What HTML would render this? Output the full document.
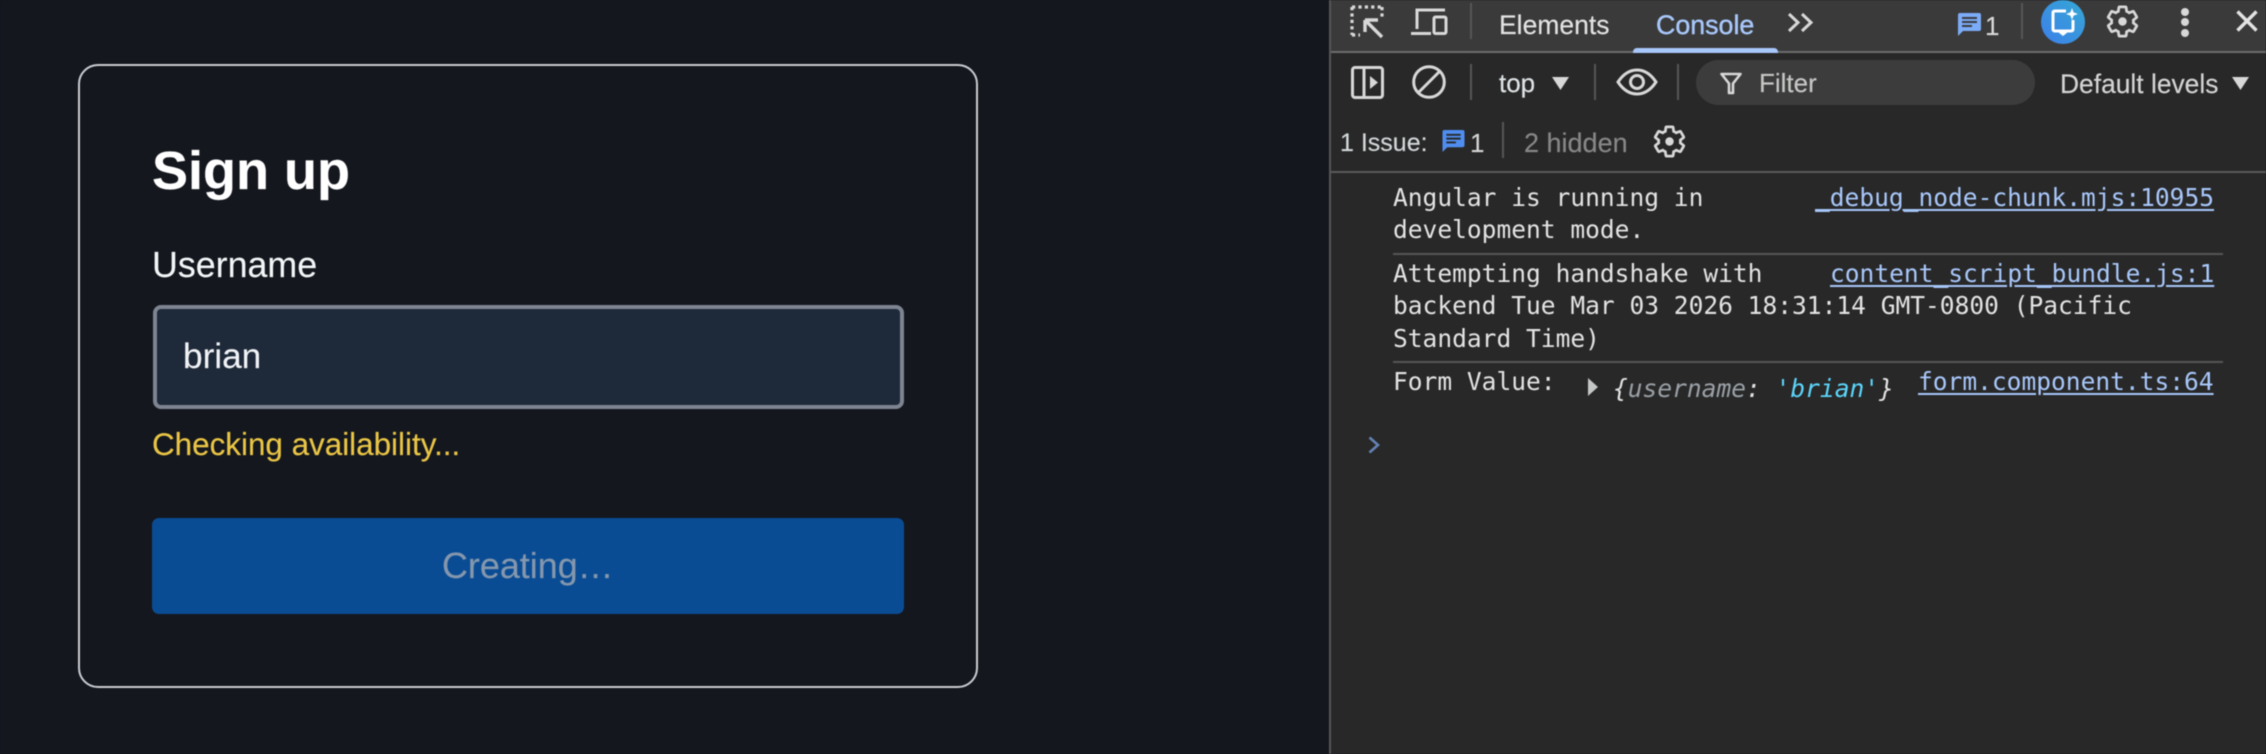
<!DOCTYPE html>
<html lang="en">
<head>
<meta charset="utf-8">
<title>Sign up</title>
<style>
html,body{margin:0;padding:0;width:2266px;height:754px;overflow:hidden;background:#14171e}
#root{position:absolute;left:0;top:0;width:2266px;height:754px;overflow:hidden;background:#14171e;filter:blur(.55px)}
.t,.m{position:absolute;line-height:0;white-space:pre}
.t{font-family:"Liberation Sans",sans-serif;-webkit-text-stroke:.15px currentColor}
.m{font-family:"DejaVu Sans Mono","Liberation Mono",monospace;font-size:24.55px;color:#e3e3e3}
.a{color:#a8c7fa;text-decoration:underline;text-underline-offset:3px}
.b{position:absolute;box-sizing:border-box}
.sep{position:absolute;width:2px;background:#565656}
svg{position:absolute;overflow:visible}
</style>
</head>
<body>
<div id="root">
  <!-- Form card -->
  <div class="b" style="left:78px;top:64px;width:900px;height:624px;border:2px solid #c9ccd1;border-radius:20px;background:#14171e"></div>
  <div class="t" style="left:152px;top:171px;font-size:54px;font-weight:700;color:#fff">Sign up</div>
  <div class="t" style="left:152px;top:265px;font-size:35.8px;color:#f2f6f7">Username</div>
  <div class="b" style="left:153px;top:305px;width:751px;height:104px;border:4px solid #7e8491;border-radius:8px;background:#1e2939"></div>
  <div class="t" style="left:183px;top:357px;font-size:35.2px;color:#f0f2f5">brian</div>
  <div class="t" style="left:152px;top:445px;font-size:31.4px;color:#eac545">Checking availability...</div>
  <div class="b" style="left:152px;top:518px;width:752px;height:96px;border-radius:7px;background:#0a4c94"></div>
  <div class="t" style="left:442px;top:566px;font-size:35.9px;color:#8497ad">Creating…</div>

  <!-- DevTools panel -->
  <div class="b" style="left:1329px;top:0;width:937px;height:754px;background:#282828;border-left:2px solid #555"></div>
  <div class="b" style="left:1331px;top:0;width:935px;height:51px;background:#3a3a3a"></div>
  <div class="b" style="left:1331px;top:51px;width:935px;height:2px;background:#6c6c6c"></div>
  <div class="b" style="left:1633px;top:48px;width:145px;height:5px;background:#a8c7fa;border-radius:4px 4px 0 0"></div>
  <div class="b" style="left:1331px;top:171px;width:935px;height:2px;background:#5a5a5a"></div>

  <!-- Toolbar 1 icons -->
  <svg style="left:1350px;top:5px" width="34" height="33" viewBox="0 0 34 33" fill="none" stroke="#d8d8d8">
    <path d="M2 2H32M2 2V30M2 30H10M32 2V14" stroke-width="3.2" stroke-dasharray="3.2 3.2"/>
    <path d="M15 15H28M15 15V27M15 15L32 32" stroke-width="3.4"/>
  </svg>
  <svg style="left:1411px;top:8px" width="37" height="28" viewBox="0 0 37 28" fill="none" stroke="#d8d8d8" stroke-width="3">
    <path d="M6 21V2H34"/><path d="M0 25.5H20"/><rect x="23" y="9" width="12" height="16.5" rx="1.5"/>
  </svg>
  <div class="sep" style="left:1470px;top:3px;height:36px"></div>
  <div class="t" style="left:1499px;top:25px;font-size:26.5px;color:#e3e3e3">Elements</div>
  <div class="t" style="left:1656px;top:25px;font-size:26.8px;color:#a8c7fa;-webkit-text-stroke:.4px #a8c7fa">Console</div>
  <svg style="left:1787px;top:12px" width="27" height="21" viewBox="0 0 27 21" fill="none" stroke="#d8d8d8" stroke-width="3">
    <path d="M2 2L11 10.5L2 19M15 2L24 10.5L15 19"/>
  </svg>
  <svg style="left:1958px;top:13px" width="23" height="23" viewBox="0 0 23 23">
    <path d="M2 0H21Q23 0 23 2V16Q23 18 21 18H5L0 23V2Q0 0 2 0Z" fill="#7cacf8"/>
    <path d="M4 5H19M4 9H19M4 13H14" stroke="#3b3b3b" stroke-width="2"/>
  </svg>
  <div class="t" style="left:1985px;top:26px;font-size:26px;color:#d8d8d8">1</div>
  <div class="sep" style="left:2021px;top:3px;height:36px"></div>
  <svg style="left:2041px;top:0" width="44" height="44" viewBox="0 0 44 44">
    <defs><linearGradient id="g" x1="0" y1="1" x2="1" y2="0"><stop offset="0" stop-color="#3d7fea"/><stop offset="1" stop-color="#35a8d4"/></linearGradient></defs>
    <circle cx="22" cy="22" r="22" fill="url(#g)"/>
    <path d="M25 11H14Q12 11 12 13V29Q12 31 14 31H30Q32 31 32 29V20" fill="none" stroke="#fff" stroke-width="3"/>
    <path d="M17 32H27L22 36Z" fill="#fff"/>
    <path d="M31 8L32.6 12.4L37 14L32.6 15.6L31 20L29.4 15.6L25 14L29.4 12.4Z" fill="#fff"/>
  </svg>
  <svg style="left:2105px;top:4px" width="35" height="35" viewBox="0 0 24 24"><path d="M19.43 12.98c.04-.32.07-.64.07-.98 0-.34-.03-.66-.07-.98l2.11-1.65c.19-.15.24-.42.12-.64l-2-3.46c-.09-.16-.26-.25-.44-.25-.06 0-.12.01-.17.03l-2.49 1c-.52-.4-1.08-.73-1.69-.98l-.38-2.65C14.46 2.18 14.25 2 14 2h-4c-.25 0-.46.18-.49.42l-.38 2.65c-.61.25-1.17.59-1.69.98l-2.49-1c-.06-.02-.12-.03-.18-.03-.17 0-.34.09-.43.25l-2 3.46c-.13.22-.07.49.12.64l2.11 1.65c-.04.32-.07.65-.07.98 0 .33.03.66.07.98l-2.11 1.65c-.19.15-.24.42-.12.64l2 3.46c.09.16.26.25.44.25.06 0 .12-.01.17-.03l2.49-1c.52.4 1.08.73 1.69.98l.38 2.65c.03.24.24.42.49.42h4c.25 0 .46-.18.49-.42l.38-2.65c.61-.25 1.17-.59 1.69-.98l2.49 1c.06.02.12.03.18.03.17 0 .34-.09.43-.25l2-3.46c.12-.22.07-.49-.12-.64l-2.11-1.65z" fill="none" stroke="#d8d8d8" stroke-width="1.9"/><circle cx="12" cy="12" r="2.9" fill="#d8d8d8"/></svg>
  <svg style="left:2180px;top:7px" width="10" height="30" viewBox="0 0 10 30" fill="#d8d8d8"><circle cx="5" cy="5" r="4"/><circle cx="5" cy="15" r="4"/><circle cx="5" cy="26" r="4"/></svg>
  <svg style="left:2236px;top:10px" width="22" height="22" viewBox="0 0 22 22" stroke="#e3e3e3" stroke-width="3.4"><path d="M1.5 1.5L20.5 20.5M20.5 1.5L1.5 20.5"/></svg>

  <!-- Toolbar 2 -->
  <svg style="left:1351px;top:66px" width="33" height="33" viewBox="0 0 33 33" fill="none" stroke="#d8d8d8" stroke-width="3">
    <rect x="1.5" y="1.5" width="30" height="30" rx="2.5"/><path d="M13 2V31"/><path d="M19 10L27 16.5L19 23Z" fill="#d8d8d8" stroke="none"/>
  </svg>
  <svg style="left:1412px;top:65px" width="34" height="34" viewBox="0 0 34 34" fill="none" stroke="#d8d8d8" stroke-width="3">
    <circle cx="17" cy="17" r="15.3"/><path d="M6.5 27.5L27.5 6.5"/>
  </svg>
  <div class="sep" style="left:1470px;top:64px;height:36px"></div>
  <div class="t" style="left:1499px;top:83px;font-size:26px;color:#dfe3e5">top</div>
  <svg style="left:1552px;top:77px" width="17" height="13" viewBox="0 0 17 13"><path d="M0 0H17L8.5 13Z" fill="#d8d8d8"/></svg>
  <div class="sep" style="left:1594px;top:64px;height:36px"></div>
  <svg style="left:1616px;top:68px" width="42" height="28" viewBox="0 0 42 28" fill="none" stroke="#d8d8d8" stroke-width="3">
    <path d="M2 14Q10 2 21 2T40 14Q32 26 21 26T2 14Z"/><circle cx="21" cy="14" r="6.5"/>
  </svg>
  <div class="sep" style="left:1677px;top:64px;height:36px"></div>
  <div class="b" style="left:1696px;top:60px;width:339px;height:45px;border-radius:23px;background:#3d3c3c"></div>
  <svg style="left:1720px;top:72px" width="22" height="22" viewBox="0 0 22 22" fill="none" stroke="#d8d8d8" stroke-linejoin="round" stroke-width="2.6"><path d="M1.5 2H20.5L13 11.5V21H9V11.5Z"/></svg>
  <div class="t" style="left:1759px;top:83px;font-size:26px;color:#c4c7c5">Filter</div>
  <div class="t" style="left:2060px;top:84px;font-size:26.4px;color:#d4d4d4">Default levels</div>
  <svg style="left:2232px;top:77px" width="17" height="13" viewBox="0 0 17 13"><path d="M0 0H17L8.5 13Z" fill="#d8d8d8"/></svg>

  <!-- Toolbar 3 -->
  <div class="t" style="left:1340px;top:143px;font-size:25px;color:#d4d8da">1 Issue:</div>
  <svg style="left:1442px;top:130px" width="23" height="22" viewBox="0 0 23 23">
    <path d="M2 0H21Q23 0 23 2V16Q23 18 21 18H5L0 23V2Q0 0 2 0Z" fill="#4f8ef0"/>
    <path d="M4 5H19M4 9H19M4 13H14" stroke="#282828" stroke-width="2"/>
  </svg>
  <div class="t" style="left:1470px;top:143px;font-size:26px;color:#d4d4d4">1</div>
  <div class="sep" style="left:1502px;top:122px;height:36px"></div>
  <div class="t" style="left:1524px;top:143px;font-size:27px;color:#878787">2 hidden</div>
  <svg style="left:1652px;top:124px" width="35" height="35" viewBox="0 0 24 24"><path d="M19.43 12.98c.04-.32.07-.64.07-.98 0-.34-.03-.66-.07-.98l2.11-1.65c.19-.15.24-.42.12-.64l-2-3.46c-.09-.16-.26-.25-.44-.25-.06 0-.12.01-.17.03l-2.49 1c-.52-.4-1.08-.73-1.69-.98l-.38-2.65C14.46 2.18 14.25 2 14 2h-4c-.25 0-.46.18-.49.42l-.38 2.65c-.61.25-1.17.59-1.69.98l-2.49-1c-.06-.02-.12-.03-.18-.03-.17 0-.34.09-.43.25l-2 3.46c-.13.22-.07.49.12.64l2.11 1.65c-.04.32-.07.65-.07.98 0 .33.03.66.07.98l-2.11 1.65c-.19.15-.24.42-.12.64l2 3.46c.09.16.26.25.44.25.06 0 .12-.01.17-.03l2.49-1c.52.4 1.08.73 1.69.98l.38 2.65c.03.24.24.42.49.42h4c.25 0 .46-.18.49-.42l.38-2.65c.61-.25 1.17-.59 1.69-.98l2.49 1c.06.02.12.03.18.03.17 0 .34-.09.43-.25l2-3.46c.12-.22.07-.49-.12-.64l-2.11-1.65z" fill="none" stroke="#d8d8d8" stroke-width="1.9"/><circle cx="12" cy="12" r="2.9" fill="#d8d8d8"/></svg>

  <!-- Console messages -->
  <div class="m" style="left:1393px;top:198px">Angular is running in</div>
  <div class="m" style="left:1393px;top:230px">development mode.</div>
  <div class="m a" style="left:1815px;top:198px">_debug_node-chunk.mjs:10955</div>
  <div class="b" style="left:1393px;top:253px;width:830px;height:2px;background:#555"></div>
  <div class="m" style="left:1393px;top:274px">Attempting handshake with</div>
  <div class="m" style="left:1393px;top:306px">backend Tue Mar 03 2026 18:31:14 GMT-0800 (Pacific</div>
  <div class="m" style="left:1393px;top:339px">Standard Time)</div>
  <div class="m a" style="left:1830px;top:274px">content_script_bundle.js:1</div>
  <div class="b" style="left:1393px;top:361px;width:830px;height:2px;background:#555"></div>
  <div class="m" style="left:1393px;top:382px">Form Value:</div>
  <svg style="left:1588px;top:378px" width="10" height="18" viewBox="0 0 10 18"><path d="M0 0L10 9L0 18Z" fill="#c4c7c5"/></svg>
  <div class="m" style="left:1613px;top:389px;font-style:italic"><span style="color:#e3e3e3">{</span><span style="color:#9aa0a6">username</span><span style="color:#e3e3e3">:</span> <span style="color:#5cd5fb">'brian'</span><span style="color:#e3e3e3">}</span></div>
  <div class="m a" style="left:1918px;top:382px">form.component.ts:64</div>
  <svg style="left:1368px;top:436px" width="12" height="18" viewBox="0 0 12 18" fill="none" stroke="#6482b4" stroke-width="2.6"><path d="M1.5 1.5L10 9L1.5 16.5"/></svg>
</div>
</body>
</html>
